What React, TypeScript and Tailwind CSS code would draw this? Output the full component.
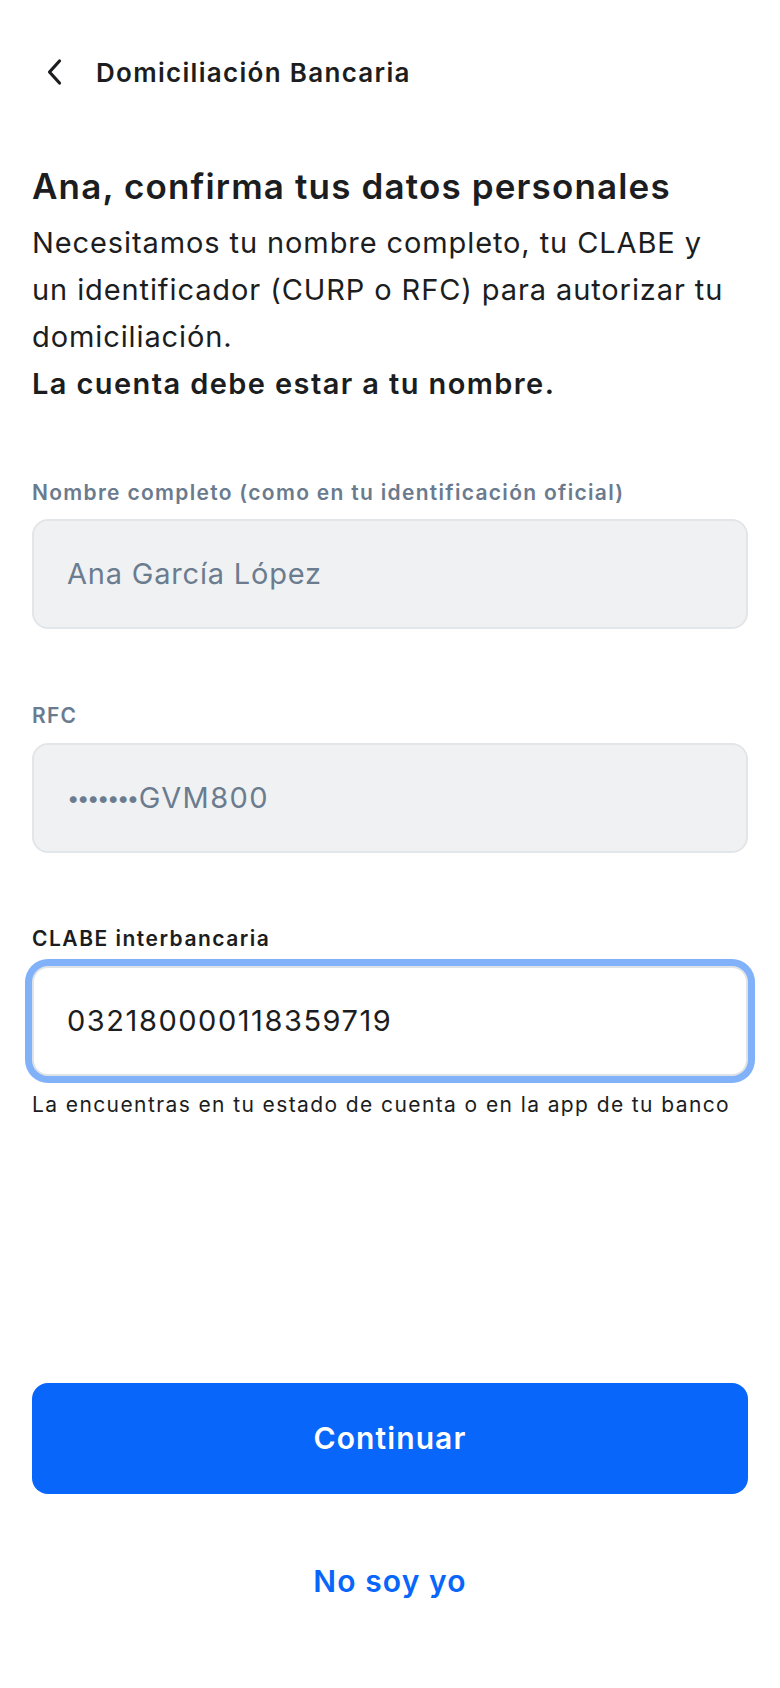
import React from "react";

function BackChevron() {
  return (
    <svg width="18" height="28" viewBox="0 0 18 28" fill="none" aria-hidden="true">
      <polyline
        points="13.5,3 3.5,14 13.5,25"
        stroke="#1b1d20"
        strokeWidth="3.2"
        strokeLinecap="round"
        strokeLinejoin="round"
      />
    </svg>
  );
}

export default function App() {
  return (
    <div className="w-[780px] min-h-[1688px] bg-white px-8 font-['Inter','Noto_Sans',sans-serif] text-[#1b1d20]">
      {/* top bar */}
      <div className="flex items-center h-12 mt-12">
        <div className="w-[64px] flex items-center pl-[14px]">
          <BackChevron />
        </div>
        <h1 className="text-[26px] font-semibold tracking-[1.3px]">Domiciliación Bancaria</h1>
      </div>

      {/* intro */}
      <h2 className="mt-[68px] text-[35px] leading-[44px] font-semibold tracking-[1.15px] whitespace-nowrap">
        Ana, confirma tus datos personales
      </h2>
      <p className="mt-[11px] text-[29px] leading-[47px] tracking-[0.9px] whitespace-nowrap">
        Necesitamos tu nombre completo, tu CLABE y
        <br />
        un identificador (CURP o RFC) para autorizar tu
        <br />
        domiciliación.
        <br />
        <span className="font-semibold tracking-[1.4px]">La cuenta debe estar a tu nombre.</span>
      </p>

      {/* name */}
      <label className="block mt-[72px] text-[21px] leading-[28px] font-semibold text-[#6b7b8e] tracking-[1.3px] whitespace-nowrap">
        Nombre completo (como en tu identificación oficial)
      </label>
      <div className="mt-3 h-[110px] rounded-2xl bg-[#f0f1f3] border-2 border-[#e3e6e9] flex items-center px-[33px]">
        <span className="text-[29px] text-[#6b7c8f] tracking-[0.8px]">Ana García López</span>
      </div>

      {/* rfc */}
      <label className="block mt-[73px] text-[21px] leading-[28px] font-semibold text-[#6b7b8e] tracking-[1.2px]">
        RFC
      </label>
      <div className="mt-[13px] h-[110px] rounded-2xl bg-[#f0f1f3] border-2 border-[#e3e6e9] flex items-center px-[33px]">
        <span className="text-[29px] text-[#6b7c8f] tracking-[1.4px] flex items-center">
          <span className="text-[22px] tracking-[-2.4px] mr-[2px]">•••••••</span>
          <span>GVM800</span>
        </span>
      </div>

      {/* clabe */}
      <label className="block mt-[72px] text-[21px] leading-[28px] font-semibold text-[#1b1d20] tracking-[1.5px]">
        CLABE interbancaria
      </label>
      <div className="mt-[13px] h-[110px] rounded-2xl bg-white border-2 border-[#dfe2e6] ring-[7px] ring-[#80b1f9] flex items-center px-[33px]">
        <span className="text-[29px] text-[#1b1d20] tracking-[1.55px]">032180000118359719</span>
      </div>
      <p className="mt-[15px] text-[21px] leading-[28px] text-[#1b1d20] tracking-[1.4px] whitespace-nowrap">
        La encuentras en tu estado de cuenta o en la app de tu banco
      </p>

      {/* actions */}
      <button className="mt-[264px] w-full h-[111px] rounded-2xl bg-[#0866fa] text-white text-[30px] font-semibold tracking-[1.1px]">
        Continuar
      </button>
      <div className="mt-[67px] h-10 flex items-center justify-center">
        <span className="text-[30px] leading-[40px] font-semibold text-[#0866fa] tracking-[1.1px]">No soy yo</span>
      </div>
    </div>
  );
}
